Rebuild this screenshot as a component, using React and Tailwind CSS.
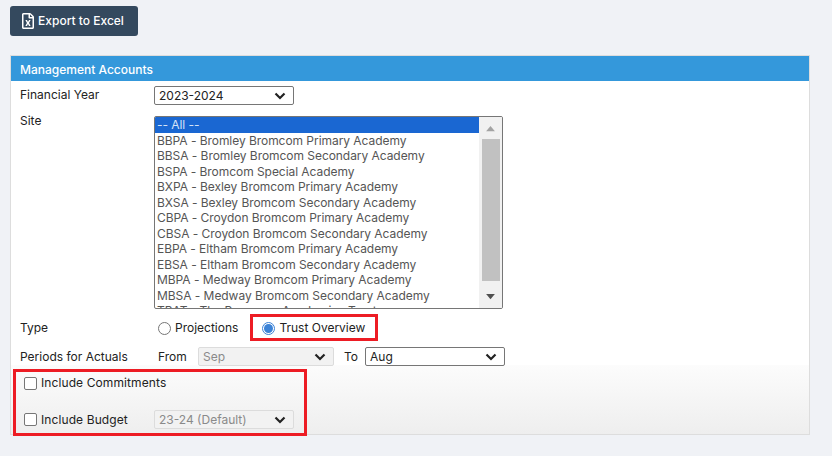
import React from "react";
import { FaRegFileExcel } from "react-icons/fa";

const font = { fontFamily: "Inter, 'Liberation Sans', sans-serif" };

const sites = [
  "BBPA - Bromley Bromcom Primary Academy",
  "BBSA - Bromley Bromcom Secondary Academy",
  "BSPA - Bromcom Special Academy",
  "BXPA - Bexley Bromcom Primary Academy",
  "BXSA - Bexley Bromcom Secondary Academy",
  "CBPA - Croydon Bromcom Primary Academy",
  "CBSA - Croydon Bromcom Secondary Academy",
  "EBPA - Eltham Bromcom Primary Academy",
  "EBSA - Eltham Bromcom Secondary Academy",
  "MBPA - Medway Bromcom Primary Academy",
  "MBSA - Medway Bromcom Secondary Academy",
];

function Chevron({ className }) {
  return (
    <svg viewBox="0 0 12 8" className={className} fill="none" stroke="currentColor" strokeWidth="2.2">
      <path d="M1.5 1.5 L6 6 L10.5 1.5" />
    </svg>
  );
}

function Select({ value, disabled, className }) {
  return (
    <div
      className={`relative flex h-[19px] items-center rounded-[2px] border pl-1 text-[12px] ${
        disabled ? "border-[#dcdcdc] bg-[#f2f2f2] text-[#8a8a8a]" : "border-[#767676] bg-white text-[#222]"
      } ${className}`}
    >
      <span>{value}</span>
      <Chevron className="absolute right-[7px] top-[5px] h-[8px] w-[12px] text-[#222]" />
    </div>
  );
}

function Radio({ checked, label }) {
  return (
    <label className="flex items-center gap-[4px]">
      <span
        className={`flex h-[13px] w-[13px] items-center justify-center rounded-full border bg-white ${
          checked ? "border-[#3b82d6]" : "border-[#767676]"
        }`}
      >
        {checked && <span className="h-[9px] w-[9px] rounded-full bg-[#3b82d6]" />}
      </span>
      <span>{label}</span>
    </label>
  );
}

function Checkbox({ label }) {
  return (
    <label className="flex items-center gap-[4px]">
      <span className="h-[13px] w-[13px] rounded-[2px] border border-[#767676] bg-white" />
      <span className="tracking-[0.1px]">{label}</span>
    </label>
  );
}

export default function App() {
  return (
    <div style={font} className="relative h-[456px] w-[832px] overflow-hidden bg-[#f0f2f6] pl-[10px] pt-[6px] text-[12px] text-[#222]">
      <button className="flex h-[30px] w-[128px] items-center justify-center gap-[4px] rounded-[3px] bg-[#34495e] pr-[2px] text-[12px] font-medium text-white">
        <FaRegFileExcel className="h-[16px] w-[12px]" />
        Export to Excel
      </button>

      <div className="mt-[19px] flex h-[380px] w-[800px] flex-col border border-[#dddddd] bg-white">
        <div className="flex h-[25px] shrink-0 items-center bg-[#3498db] pl-[9px] pt-[2px] text-[12px] font-medium text-white">
          Management Accounts
        </div>

        <div className="relative z-10 flex h-[284px] shrink-0 flex-col pl-[9px]">
          <div className="mt-[4px] flex">
            <div className="w-[134px] pt-[1px] leading-[17px]">Financial Year</div>
            <Select value="2023-2024" className="mt-[1px] w-[140px]" />
          </div>

          <div className="mt-[6px] flex">
            <div className="w-[134px] pt-[1px] leading-[17px]">Site</div>
            <div className="mt-[5px] flex h-[193px] w-[349px] overflow-hidden rounded-[2px] border border-[#767676] bg-white">
              <div className="flex-1 overflow-hidden tracking-[-0.05px] text-[#555]">
                <div className="h-[15.5px] bg-[#1a67d2] pl-[2px] leading-[15.5px] text-[#d5e3f7]">-- All --</div>
                {sites.map((s) => (
                  <div key={s} className="h-[15.5px] whitespace-nowrap pl-[2px] leading-[15.5px]">
                    {s}
                  </div>
                ))}
                <div className="h-[15.5px] whitespace-nowrap pl-[2px] leading-[15.5px]">
                  TBAT - The Bromcom Academies Trust
                </div>
              </div>
              <div className="flex w-[23px] flex-col items-center bg-[#f1f1f1]">
                <svg viewBox="0 0 12 8" className="mt-[8px] h-[7px] w-[11px] shrink-0 text-[#a3a3a3]" fill="currentColor">
                  <path d="M6 1 L11 7 H1 Z" />
                </svg>
                <div className="mt-[7px] h-[142px] w-[18px] shrink-0 bg-[#c1c1c1]" />
                <svg viewBox="0 0 12 8" className="mt-[12px] h-[7px] w-[11px] shrink-0 text-[#505050]" fill="currentColor">
                  <path d="M1 1 H11 L6 7 Z" />
                </svg>
              </div>
            </div>
          </div>

          <div className="mt-[10px] flex h-[19px] items-center">
            <div className="w-[138px]">Type</div>
            <Radio label="Projections" />
            <div className="ml-[24px]">
              <Radio checked label="Trust Overview" />
            </div>
          </div>

          <div className="mt-[10px] flex h-[19px] shrink-0 items-center">
            <div className="w-[138px]">Periods for Actuals</div>
            <div className="w-[40px]">From</div>
            <Select value="Sep" disabled className="w-[136px]" />
            <div className="ml-[10px] w-[21px]">To</div>
            <Select value="Aug" className="w-[140px]" />
          </div>
        </div>

        <div className="flex h-[69px] shrink-0 flex-col bg-gradient-to-b from-[#fcfcfc] to-[#eeeeee] pl-[13px]">
          <div className="mt-[9px] h-[17px]">
            <Checkbox label="Include Commitments" />
          </div>
          <div className="mt-[19px] flex h-[19px] items-center">
            <div className="w-[130px]">
              <Checkbox label="Include Budget" />
            </div>
            <Select value="23-24 (Default)" disabled className="w-[140px]" />
          </div>
        </div>
      </div>

      <div className="absolute left-[250px] top-[314px] z-20 h-[27px] w-[128px] border-[3px] border-[#ed1c24]" />
      <div className="absolute left-[13px] top-[369px] z-20 h-[67px] w-[294px] border-[3px] border-[#ed1c24]" />
    </div>
  );
}
